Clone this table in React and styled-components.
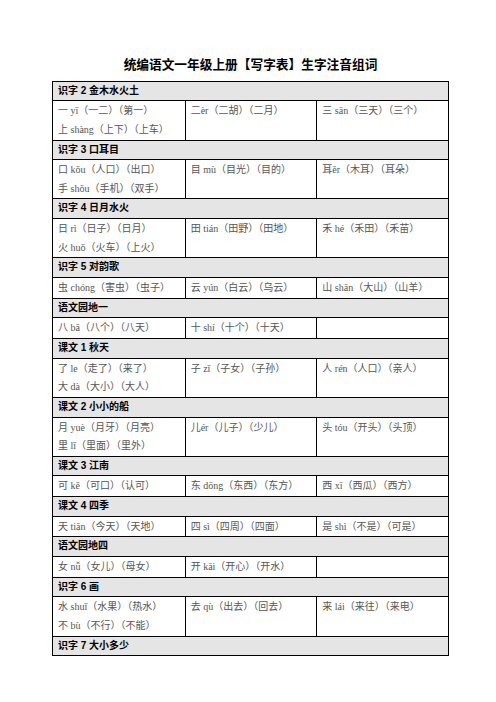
import styled, { createGlobalStyle } from "styled-components";

const GlobalStyle = createGlobalStyle`
  html, body {
    margin: 0;
    padding: 0;
    background: #ffffff;
  }
`;

const Page = styled.div`
  width: 496px;
  box-sizing: border-box;
  padding: 54px 0 0 5px;
  display: flex;
  flex-direction: column;
  align-items: center;
`;

const Title = styled.h1`
  margin: 0 0 6.7px;
  font-family: "Noto Sans CJK SC", sans-serif;
  font-size: 12.7px;
  line-height: 20px;
  font-weight: 700;
  color: #000;
`;

const Sheet = styled.div`
  width: 397px;
  box-sizing: border-box;
  border: 1px solid #000;
  display: flex;
  flex-direction: column;
`;

const SectionHead = styled.div`
  background: #e5e5e5;
  border-top: ${(p) => (p.$first ? "none" : "1px solid #000")};
  padding: 0 5px;
  line-height: 18.7px;
  font-family: "Liberation Sans", "Noto Sans CJK SC", sans-serif;
  font-size: 10px;
  font-weight: 700;
  color: #000;
`;

const Row = styled.div`
  display: grid;
  grid-template-columns: repeat(3, 1fr);
  border-top: 1px solid #000;
`;

const Cell = styled.div`
  padding: 1px 5px 0;
  border-left: ${(p) => (p.$first ? "none" : "1px solid #000")};
  font-family: "Liberation Serif", "Noto Sans CJK SC", serif;
  font-size: 10px;
  line-height: 18.6px;
  color: #555;
  white-space: nowrap;
`;

const Line = styled.div``;

const sections = [
  {
    title: "识字 2 金木水火土",
    rows: [
      [
        ["一 yī（一二）（第一）", "上 shàng（上下）（上车）"],
        ["二èr（二胡）（二月）"],
        ["三 sān（三天）（三个）"],
      ],
    ],
  },
  {
    title: "识字 3 口耳目",
    rows: [
      [
        ["口 kǒu（人口）（出口）", "手 shǒu（手机）（双手）"],
        ["目 mù（目光）（目的）"],
        ["耳ěr（木耳）（耳朵）"],
      ],
    ],
  },
  {
    title: "识字 4 日月水火",
    rows: [
      [
        ["日 rì（日子）（日月）", "火 huǒ（火车）（上火）"],
        ["田 tián（田野）（田地）"],
        ["禾 hé（禾田）（禾苗）"],
      ],
    ],
  },
  {
    title: "识字 5 对韵歌",
    rows: [
      [
        ["虫 chóng（害虫）（虫子）"],
        ["云 yún（白云）（乌云）"],
        ["山 shān（大山）（山羊）"],
      ],
    ],
  },
  {
    title: "语文园地一",
    rows: [[["八 bā（八个）（八天）"], ["十 shí（十个）（十天）"], []]],
  },
  {
    title: "课文 1 秋天",
    rows: [
      [
        ["了 le（走了）（来了）", "大 dà（大小）（大人）"],
        ["子 zǐ（子女）（子孙）"],
        ["人 rén（人口）（亲人）"],
      ],
    ],
  },
  {
    title: "课文 2 小小的船",
    rows: [
      [
        ["月 yuè（月牙）（月亮）", "里 lǐ（里面）（里外）"],
        ["儿ér（儿子）（少儿）"],
        ["头 tóu（开头）（头顶）"],
      ],
    ],
  },
  {
    title: "课文 3 江南",
    rows: [
      [
        ["可 kě（可口）（认可）"],
        ["东 dōng（东西）（东方）"],
        ["西 xī（西瓜）（西方）"],
      ],
    ],
  },
  {
    title: "课文 4 四季",
    rows: [
      [
        ["天 tiān（今天）（天地）"],
        ["四 sì（四周）（四面）"],
        ["是 shì（不是）（可是）"],
      ],
    ],
  },
  {
    title: "语文园地四",
    rows: [[["女 nǚ（女儿）（母女）"], ["开 kāi（开心）（开水）"], []]],
  },
  {
    title: "识字 6 画",
    rows: [
      [
        ["水 shuǐ（水果）（热水）", "不 bù（不行）（不能）"],
        ["去 qù（出去）（回去）"],
        ["来 lái（来往）（来电）"],
      ],
    ],
  },
  { title: "识字 7 大小多少", rows: [] },
];

function App() {
  return (
    <>
      <GlobalStyle />
      <Page>
        <Title>统编语文一年级上册【写字表】生字注音组词</Title>
        <Sheet>
          {sections.map((section, i) => (
            <div key={section.title}>
              <SectionHead $first={i === 0}>{section.title}</SectionHead>
              {section.rows.map((row, r) => (
                <Row key={r}>
                  {row.map((cell, c) => (
                    <Cell key={c} $first={c === 0}>
                      {cell.map((line) => (
                        <Line key={line}>{line}</Line>
                      ))}
                    </Cell>
                  ))}
                </Row>
              ))}
            </div>
          ))}
        </Sheet>
      </Page>
    </>
  );
}

export default App;
